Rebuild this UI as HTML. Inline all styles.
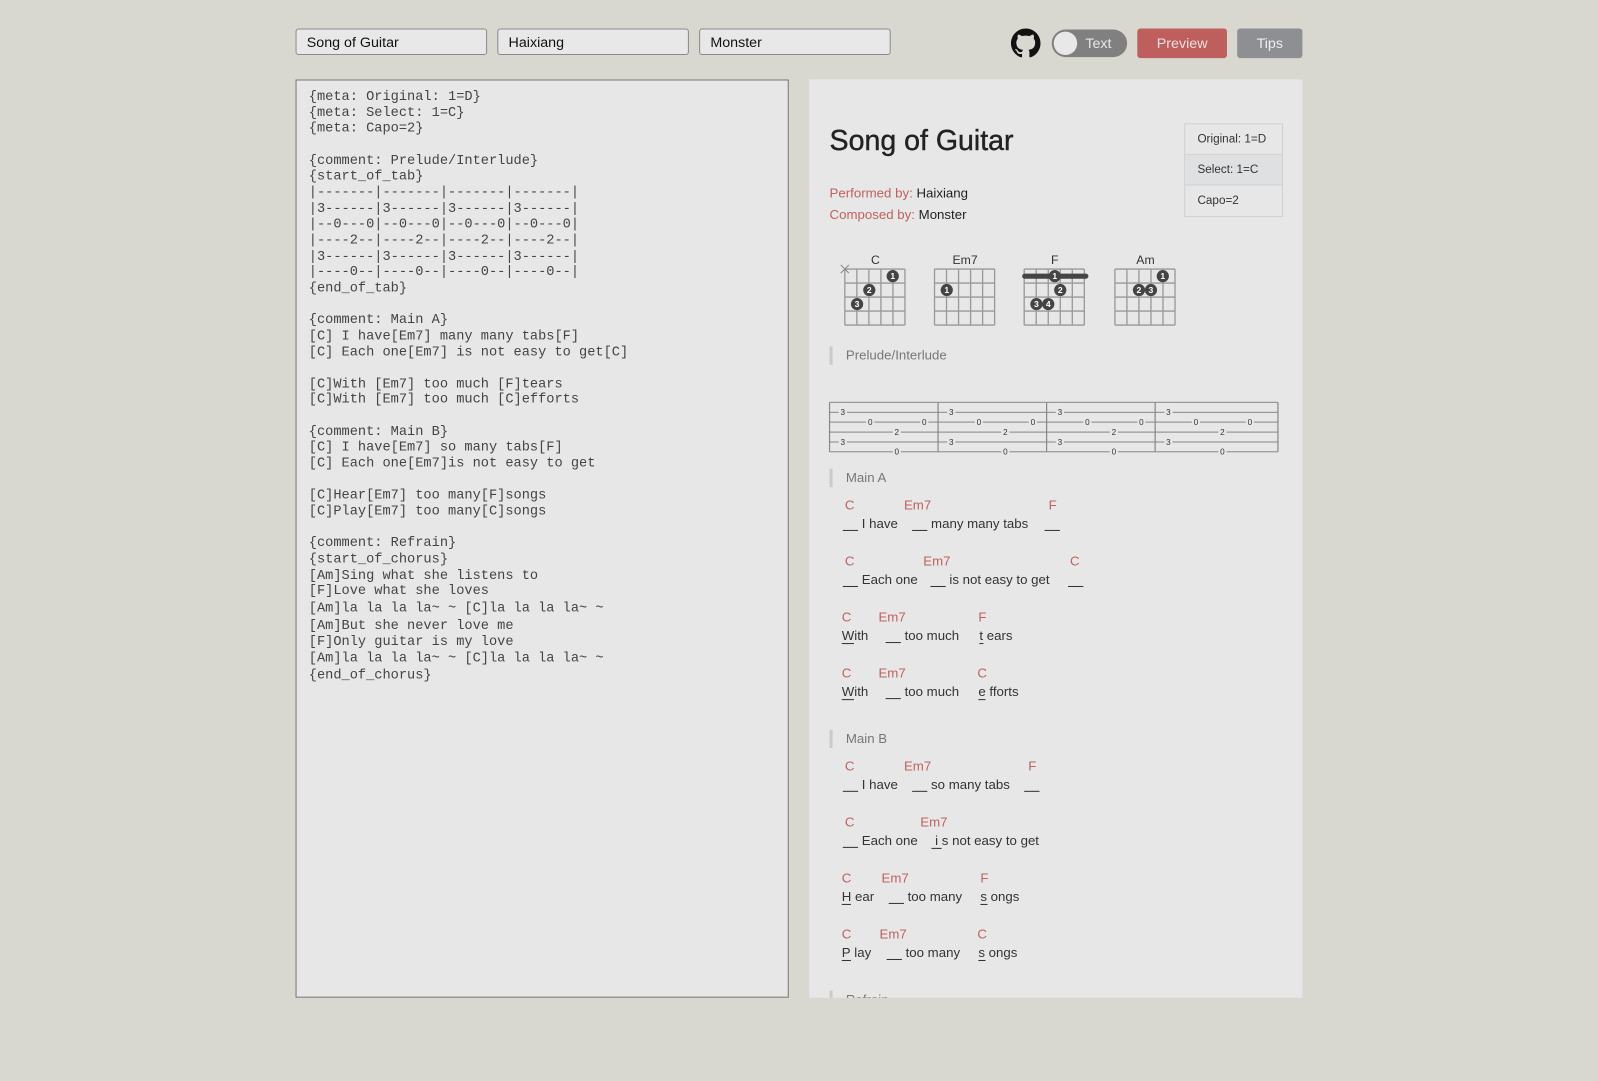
<!DOCTYPE html>
<html><head><meta charset="utf-8"><style>
html,body{margin:0;padding:0;background:#d9d8d0;width:1598px;height:1081px;overflow:hidden}
#w{position:absolute;left:0;top:0;width:1568px;height:1061px;transform:scale(1.0191);transform-origin:0 0;font-family:"Liberation Sans",sans-serif}
.a{position:absolute;white-space:pre}
.inp{position:absolute;top:28px;height:26px;border:1px solid #8a8a8a;border-radius:3px;background:#e8e8e8;box-sizing:border-box;font-size:14px;line-height:24px;padding-left:10px;color:#111}
pre{margin:0;position:absolute;left:303px;top:88px;font-family:"Liberation Mono",monospace;font-size:13.4px;line-height:15.65px;color:#444}
.ch{position:absolute;font-size:13px;color:#c0605f;white-space:pre}
.ly{position:absolute;font-size:13px;color:#333;white-space:pre}
.u{display:inline-block;border-bottom:1px solid #333;line-height:14px}
.bl{display:inline-block;width:15px;border-bottom:1px solid #333;height:14px;vertical-align:top}
.sec{position:absolute;left:814px;border-left:3px solid #c9cacc;padding-left:13px;font-size:13px;color:#777;height:18px;line-height:18px}
.mb{position:absolute;left:1162px;top:121px;width:97px;height:92px;border:1px solid #cfd0d2;box-sizing:border-box;font-size:11.5px;color:#333}
.mb div{height:30px;line-height:30px;padding-left:12px;box-sizing:border-box}
</style></head><body><div id="w">
<div class="inp" style="left:290px;width:188px">Song of Guitar</div>
<div class="inp" style="left:488px;width:188px">Haixiang</div>
<div class="inp" style="left:686px;width:188px">Monster</div>
<svg class="a" style="left:992px;top:28px" width="29" height="29" viewBox="0 0 16 16"><path fill="#111" d="M8 0C3.58 0 0 3.58 0 8c0 3.540 2.290 6.530 5.470 7.590.4.07.55-.17.55-.38 0-.19-.01-.82-.01-1.49-2.010.37-2.530-.49-2.690-.94-.09-.23-.48-.94-.82-1.130-.28-.15-.68-.52-.01-.53.63-.01 1.080.58 1.230.82.72 1.210 1.870.87 2.330.66.07-.52.28-.87.51-1.070-1.780-.2-3.640-.89-3.640-3.950 0-.87.31-1.590.82-2.150-.08-.2-.36-1.020.08-2.120 0 0 .67-.21 2.200.82.64-.18 1.320-.27 2-.27.68 0 1.360.09 2 .27 1.530-1.040 2.200-.82 2.200-.82.44 1.100.16 1.920.08 2.120.51.56.82 1.270.82 2.150 0 3.070-1.870 3.750-3.650 3.950.29.25.54.73.54 1.480 0 1.070-.01 1.930-.01 2.200 0 .21.15.46.55.38A8.013 8.013 0 0016 8c0-4.420-3.580-8-8-8z"/></svg>
<div class="a" style="left:1032px;top:29px;width:74px;height:27px;border-radius:14px;background:#808080"></div>
<div class="a" style="left:1034px;top:31px;width:23px;height:23px;border-radius:50%;background:#e8e8e8"></div>
<div class="a" style="left:1065px;top:34px;font-size:14px;color:#e8e8e8">Text</div>
<div class="a" style="left:1116px;top:28px;width:88px;height:29px;border-radius:3px;background:#be5f5e;color:#f0e0e0;font-size:14px;line-height:29px;text-align:center">Preview</div>
<div class="a" style="left:1214px;top:28px;width:64px;height:29px;border-radius:3px;background:#8d8f93;color:#eee;font-size:14px;line-height:29px;text-align:center">Tips</div>

<div class="a" style="left:290px;top:78px;width:484px;height:901px;border:1px solid #777;box-sizing:border-box;background:#e7e7e7"></div>
<pre>{meta: Original: 1=D}
{meta: Select: 1=C}
{meta: Capo=2}

{comment: Prelude/Interlude}
{start_of_tab}
|-------|-------|-------|-------|
|3------|3------|3------|3------|
|--0---0|--0---0|--0---0|--0---0|
|----2--|----2--|----2--|----2--|
|3------|3------|3------|3------|
|----0--|----0--|----0--|----0--|
{end_of_tab}

{comment: Main A}
[C] I have[Em7] many many tabs[F]
[C] Each one[Em7] is not easy to get[C]

[C]With [Em7] too much [F]tears
[C]With [Em7] too much [C]efforts

{comment: Main B}
[C] I have[Em7] so many tabs[F]
[C] Each one[Em7]is not easy to get

[C]Hear[Em7] too many[F]songs
[C]Play[Em7] too many[C]songs

{comment: Refrain}
{start_of_chorus}
[Am]Sing what she listens to
[F]Love what she loves
<span style="line-height:18px">[Am]la la la la~ ~ [C]la la la la~ ~</span>
[Am]But she never love me
[F]Only guitar is my love
<span style="line-height:18px">[Am]la la la la~ ~ [C]la la la la~ ~</span>
{end_of_chorus}</pre>

<div class="a" style="left:794px;top:78px;width:484px;height:901px;background:#e7e7e7"></div>
<div class="a" style="left:814px;top:122px;font-size:28px;color:#222;-webkit-text-stroke:0.4px #222">Song of Guitar</div>
<div class="a" style="left:814px;top:182px;font-size:13px;color:#c0605f">Performed by: <span style="color:#222">Haixiang</span></div>
<div class="a" style="left:814px;top:203px;font-size:13px;color:#c0605f">Composed by: <span style="color:#222">Monster</span></div>
<div class="mb"><div style="border-bottom:1px solid #cfd0d2">Original: 1=D</div><div style="border-bottom:1px solid #cfd0d2;background:#dfe0e2">Select: 1=C</div><div>Capo=2</div></div>

<svg class="a" style="left:0;top:0" width="1568" height="1000" font-family="Liberation Sans, sans-serif">
<defs><g id="g" stroke="#999" stroke-width="1.3" fill="none">
<path d="M0 264V319M11.8 264V319M23.6 264V319M35.4 264V319M47.2 264V319M59 264V319M0 264H59M0 277.75H59M0 291.5H59M0 305.25H59M0 319H59"/></g></defs>
<g font-size="12" fill="#333" text-anchor="middle">
<text x="859" y="259">C</text><text x="947" y="259">Em7</text><text x="1035" y="259">F</text><text x="1124" y="259">Am</text></g>
<use href="#g" x="829"/><use href="#g" x="917"/><use href="#g" x="1005"/><use href="#g" x="1094"/>
<path d="M825 260L833 268M833 260L825 268" stroke="#888" stroke-width="1"/>
<rect x="1003" y="268.5" width="65" height="5" rx="2.5" fill="#444"/>
<g fill="#444"><circle cx="876" cy="271" r="6"/><circle cx="853" cy="284.6" r="6"/><circle cx="841" cy="298.4" r="6"/>
<circle cx="929" cy="284.6" r="6"/>
<circle cx="1035" cy="271" r="6"/><circle cx="1040.4" cy="284.6" r="6"/><circle cx="1017" cy="298.4" r="6"/><circle cx="1028.6" cy="298.4" r="6"/>
<circle cx="1141" cy="271" r="6"/><circle cx="1117.6" cy="284.6" r="6"/><circle cx="1129.4" cy="284.6" r="6"/></g>
<g fill="#fff" font-size="8.5" font-weight="bold" text-anchor="middle">
<text x="876" y="274">1</text><text x="853" y="287.6">2</text><text x="841" y="301.4">3</text>
<text x="929" y="287.6">1</text>
<text x="1035" y="274">1</text><text x="1040.4" y="287.6">2</text><text x="1017" y="301.4">3</text><text x="1028.6" y="301.4">4</text>
<text x="1141" y="274">1</text><text x="1117.6" y="287.6">2</text><text x="1129.4" y="287.6">3</text></g>
<g stroke="#999" stroke-width="1.2"><path d="M814 394.8H1254M814 404.6H1254M814 414.2H1254M814 424H1254M814 433.7H1254M814 443.3H1254"/>
<path d="M814 394.8V443.3M920.5 394.8V443.3M1027 394.8V443.3M1133.5 394.8V443.3M1254 394.8V443.3" stroke="#888"/></g>
<g font-size="8" fill="#333" text-anchor="middle">
<g id="m"><rect x="823" y="400" width="8" height="9" fill="#e7e7e7"/><text x="827" y="407.4">3</text>
<rect x="850" y="409.6" width="8" height="9" fill="#e7e7e7"/><text x="854" y="417">0</text>
<rect x="903" y="409.6" width="8" height="9" fill="#e7e7e7"/><text x="907" y="417">0</text>
<rect x="876" y="419.4" width="8" height="9" fill="#e7e7e7"/><text x="880" y="426.8">2</text>
<rect x="823" y="429" width="8" height="9" fill="#e7e7e7"/><text x="827" y="436.5">3</text>
<rect x="876" y="438.7" width="8" height="9" fill="#e7e7e7"/><text x="880" y="446.1">0</text></g>
<use href="#m" x="106.5"/><use href="#m" x="213"/><use href="#m" x="319.5"/></g>
</svg>

<div class="sec" style="top:340px">Prelude/Interlude</div>
<div class="sec" style="top:460px">Main A</div>
<div class="sec" style="top:716px">Main B</div>
<div class="sec" style="top:972px;height:7px;overflow:hidden">Refrain</div>

<div class="ch" style="left:829px;top:488px">C</div><div class="ch" style="left:887px;top:488px">Em7</div><div class="ch" style="left:1029px;top:488px">F</div>
<div class="ly" style="left:827px;top:506px"><span class="bl"></span> I have</div><div class="ly" style="left:895px;top:506px"><span class="bl"></span> many many tabs</div><div class="ly" style="left:1025px;top:506px"><span class="bl"></span></div>

<div class="ch" style="left:829px;top:543px">C</div><div class="ch" style="left:906px;top:543px">Em7</div><div class="ch" style="left:1050px;top:543px">C</div>
<div class="ly" style="left:827px;top:561px"><span class="bl"></span> Each one</div><div class="ly" style="left:913px;top:561px"><span class="bl"></span> is not easy to get</div><div class="ly" style="left:1048px;top:561px"><span class="bl"></span></div>

<div class="ch" style="left:826px;top:598px">C</div><div class="ch" style="left:862px;top:598px">Em7</div><div class="ch" style="left:960px;top:598px">F</div>
<div class="ly" style="left:826px;top:616px"><span class="u">W</span>ith</div><div class="ly" style="left:869px;top:616px"><span class="bl"></span> too much</div><div class="ly" style="left:961px;top:616px"><span class="u">t</span> ears</div>

<div class="ch" style="left:826px;top:653px">C</div><div class="ch" style="left:862px;top:653px">Em7</div><div class="ch" style="left:959px;top:653px">C</div>
<div class="ly" style="left:826px;top:671px"><span class="u">W</span>ith</div><div class="ly" style="left:869px;top:671px"><span class="bl"></span> too much</div><div class="ly" style="left:960px;top:671px"><span class="u">e</span> fforts</div>

<div class="ch" style="left:829px;top:744px">C</div><div class="ch" style="left:887px;top:744px">Em7</div><div class="ch" style="left:1009px;top:744px">F</div>
<div class="ly" style="left:827px;top:762px"><span class="bl"></span> I have</div><div class="ly" style="left:895px;top:762px"><span class="bl"></span> so many tabs</div><div class="ly" style="left:1005px;top:762px"><span class="bl"></span></div>

<div class="ch" style="left:829px;top:799px">C</div><div class="ch" style="left:903px;top:799px">Em7</div>
<div class="ly" style="left:827px;top:817px"><span class="bl"></span> Each one</div><div class="ly" style="left:914px;top:817px"><span class="u">&nbsp;i&nbsp;</span>s not easy to get</div>

<div class="ch" style="left:826px;top:854px">C</div><div class="ch" style="left:865px;top:854px">Em7</div><div class="ch" style="left:962px;top:854px">F</div>
<div class="ly" style="left:826px;top:872px"><span class="u">H</span> ear</div><div class="ly" style="left:872px;top:872px"><span class="bl"></span> too many</div><div class="ly" style="left:962px;top:872px"><span class="u">s</span> ongs</div>

<div class="ch" style="left:826px;top:909px">C</div><div class="ch" style="left:863px;top:909px">Em7</div><div class="ch" style="left:959px;top:909px">C</div>
<div class="ly" style="left:826px;top:927px"><span class="u">P</span> lay</div><div class="ly" style="left:870px;top:927px"><span class="bl"></span> too many</div><div class="ly" style="left:960px;top:927px"><span class="u">s</span> ongs</div>
</div></body></html>
